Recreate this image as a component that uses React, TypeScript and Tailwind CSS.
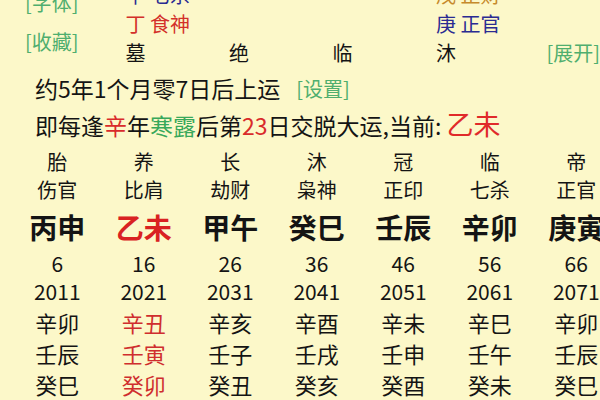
import React from "react";

// 大运列数据
interface Yun {
  stage: string;
  god: string;
  gz: string;
  age: number;
  year: number;
  years: string[];
  current?: boolean;
}

const yuns: Yun[] = [
  { stage: "胎", god: "伤官", gz: "丙申", age: 6, year: 2011, years: ["辛卯", "壬辰", "癸巳"] },
  { stage: "养", god: "比肩", gz: "乙未", age: 16, year: 2021, years: ["辛丑", "壬寅", "癸卯"], current: true },
  { stage: "长", god: "劫财", gz: "甲午", age: 26, year: 2031, years: ["辛亥", "壬子", "癸丑"] },
  { stage: "沐", god: "枭神", gz: "癸巳", age: 36, year: 2041, years: ["辛酉", "壬戌", "癸亥"] },
  { stage: "冠", god: "正印", gz: "壬辰", age: 46, year: 2051, years: ["辛未", "壬申", "癸酉"] },
  { stage: "临", god: "七杀", gz: "辛卯", age: 56, year: 2061, years: ["辛巳", "壬午", "癸未"] },
  { stage: "帝", god: "正官", gz: "庚寅", age: 66, year: 2071, years: ["辛卯", "壬辰", "癸巳"] },
];

// 四柱顶部（上方被裁掉一部分）
const pillars = [
  { a: { t: "辛 七杀", c: "text-[#2a2b92]" }, b: { t: "丁 食神", c: "text-[#d3302a]" }, s: "墓" },
  { a: null, b: null, s: "绝" },
  { a: null, b: null, s: "临" },
  { a: { t: "戊 正财", c: "text-[#c68a2c]" }, b: { t: "庚 正官", c: "text-[#2a2b92]" }, s: "沐" },
];

export default function App() {
  return (
    <div
      className="w-[600px] h-[400px] overflow-hidden bg-[#fcf8c9] text-[#141414]"
      style={{ fontFamily: '"Noto Sans CJK SC", "Noto Sans", sans-serif' }}
    >
      {/* --- 顶部四柱 --- */}
      <div className="flex mt-[-20px] pl-[25px] h-[87px] whitespace-nowrap">
        <div className="w-[102px] pt-[3px] text-[20px] leading-[39px] text-[#4fae6e]">
          <div>[字体]</div>
          <div>[收藏]</div>
        </div>
        {pillars.map((p, i) => (
          <div key={i} className="w-[105px] text-[20px] leading-[29px]">
            <div className={p.a ? p.a.c : ""}>{p.a ? p.a.t : "\u00a0"}</div>
            <div className={p.b ? p.b.c : ""}>{p.b ? p.b.t : "\u00a0"}</div>
            <div>{p.s}</div>
          </div>
        ))}
        <div className="pl-[7px] pt-[58px] text-[20px] leading-[29px] text-[#4fae6e]">[展开]</div>
      </div>

      {/* --- 起运信息 --- */}
      <div className="mt-[4px] pl-[35px] text-[23px] leading-[35px] whitespace-nowrap">
        <div className="flex items-center">
          <span>约5年1个月零7日后上运</span>
          <span className="ml-[16px] text-[20px] text-[#4fae6e]">[设置]</span>
        </div>
        <div>
          即每逢<span className="text-[#d92b2b]">辛</span>年<span className="text-[#38a85a]">寒露</span>后第
          <span className="text-[#d92b2b]">23</span>日交脱大运,当前:{" "}
          <span className="text-[27px] text-[#e02a2a]">乙未</span>
        </div>
      </div>

      {/* --- 大运表 --- */}
      <div className="flex mt-[5px] pl-[14px]">
        {yuns.map((y) => (
          <div key={y.year} className="w-[86.5px] shrink-0 flex flex-col items-center whitespace-nowrap">
            <div className="h-[28px] leading-[28px] text-[20px]">{y.stage}</div>
            <div className="h-[28px] leading-[28px] text-[20px]">{y.god}</div>
            <div className={`h-[46px] leading-[46px] text-[28px] font-bold ${y.current ? "text-[#d92222]" : ""}`}>
              {y.gz}
            </div>
            <div className="h-[26px] leading-[26px] text-[21px]">{y.age}</div>
            <div className="h-[31px] leading-[31px] text-[21px]">{y.year}</div>
            {y.years.map((g) => (
              <div key={g} className={`h-[31px] leading-[31px] text-[22px] ${y.current ? "text-[#cf2e2e]" : ""}`}>
                {g}
              </div>
            ))}
          </div>
        ))}
      </div>
    </div>
  );
}
